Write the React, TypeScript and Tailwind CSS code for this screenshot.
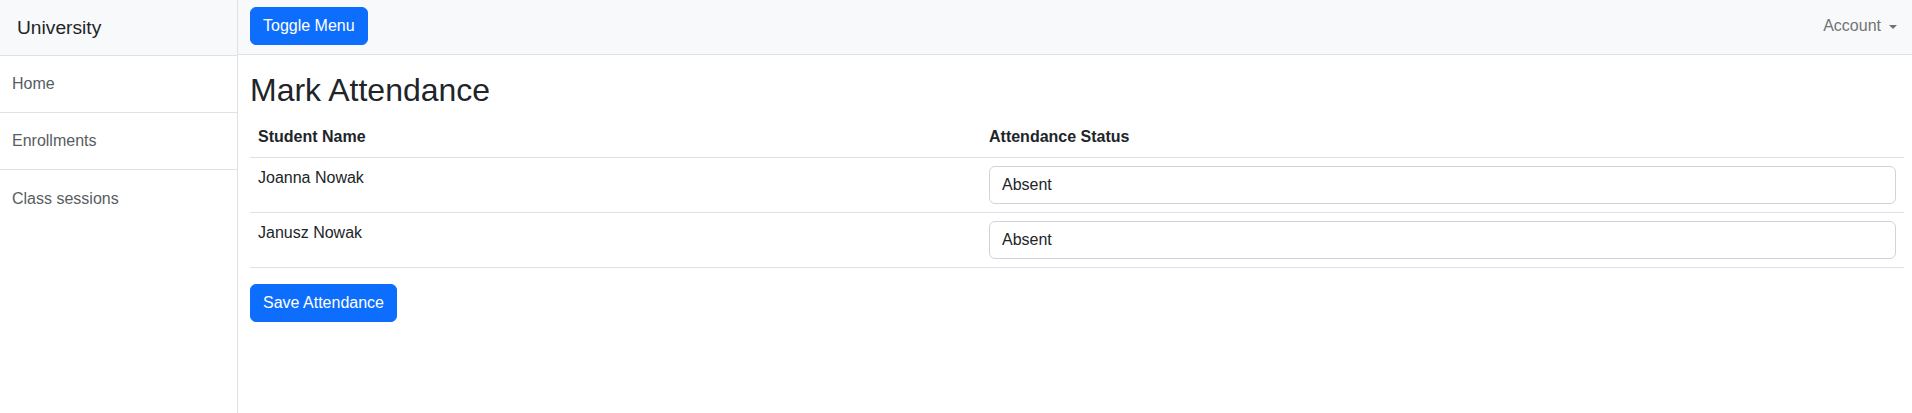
import React, { useState } from 'react';

const students = [
    { id: 1, name: 'Joanna Nowak' },
    { id: 2, name: 'Janusz Nowak' },
];

const menu = ['Home', 'Enrollments', 'Class sessions'];

export default function App() {
    const [status, setStatus] = useState<Record<number, string>>({ 1: 'Absent', 2: 'Absent' });

    return (
        <div className="flex min-h-[413px] bg-white font-['Liberation_Sans',Arial,sans-serif] text-base leading-6 text-[#212529]">
            {/* sidebar */}
            <aside className="w-[238px] shrink-0 border-r border-[#dee2e6] bg-white">
                <div className="flex h-[56px] items-center border-b border-[#dee2e6] bg-[#f8f9fa] pl-[17px] text-[19.2px]">
                    University
                </div>
                <nav className="flex flex-col">
                    {menu.map((item, i) => (
                        <a
                            key={item}
                            href="#"
                            className={`flex h-[57px] items-center pl-3 text-[#595c5f] ${i < menu.length - 1 ? 'border-b border-[#dee2e6]' : ''}`}
                        >
                            {item}
                        </a>
                    ))}
                </nav>
            </aside>

            <div className="min-w-0 flex-1">
                <header className="flex h-[55px] items-start justify-between border-b border-[#dee2e6] bg-[#f8f9fa] pl-3 pr-[15px] pt-[7px]">
                    <button className="h-[38px] rounded-[6px] border border-[#0d6efd] bg-[#0d6efd] px-3 text-white">
                        Toggle Menu
                    </button>
                    <a href="#" className="flex h-[38px] items-center text-[#737373]">
                        Account
                        <span className="ml-[8px] mt-[1px] h-0 w-0 border-x-[4.5px] border-t-[4.5px] border-x-transparent border-t-[#737373]" />
                    </a>
                </header>

                <main className="pl-3 pr-2 pt-4">
                    <h2 className="mb-2 text-[32px] font-medium leading-[1.2]">Mark Attendance</h2>
                    <table className="mb-4 w-full border-collapse">
                        <colgroup>
                            <col className="w-[731px]" />
                            <col />
                        </colgroup>
                        <thead>
                            <tr>
                                <th className="border-b border-[#dee2e6] px-2 py-2 text-left font-bold">Student Name</th>
                                <th className="border-b border-[#dee2e6] px-2 py-2 text-left font-bold">Attendance Status</th>
                            </tr>
                        </thead>
                        <tbody>
                            {students.map(s => (
                                <tr key={s.id}>
                                    <td className="border-b border-[#dee2e6] px-2 py-2 align-top">{s.name}</td>
                                    <td className="border-b border-[#dee2e6] px-2 py-2 align-top">
                                        <select
                                            value={status[s.id]}
                                            onChange={e => setStatus({ ...status, [s.id]: e.target.value })}
                                            className="block h-[38px] w-full appearance-none rounded-[6px] border border-[#ced4da] bg-white px-3 text-base leading-6 text-[#212529]"
                                        >
                                            <option>Absent</option>
                                            <option>Present</option>
                                        </select>
                                    </td>
                                </tr>
                            ))}
                        </tbody>
                    </table>
                    <button className="h-[38px] rounded-[6px] border border-[#0d6efd] bg-[#0d6efd] px-3 text-white">
                        Save Attendance
                    </button>
                </main>
            </div>
        </div>
    );
}
